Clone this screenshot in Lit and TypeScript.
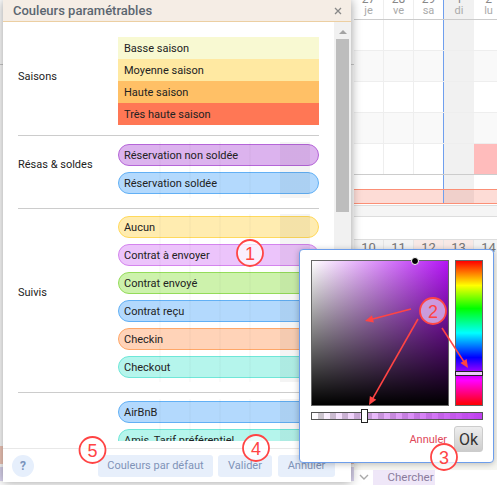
import { LitElement, html, css, svg } from "lit";
import { customElement } from "lit/decorators.js";

const days = [["27", "je"], ["28", "ve"], ["29", "sa"], ["1", "di"], ["2", "lu"]];
const days2 = ["10", "11", "12", "13", "14"];

const sections = [
  { label: "Saisons", kind: "flat", items: [["Basse saison", "s1"], ["Moyenne saison", "s2"], ["Haute saison", "s3"], ["Très haute saison", "s4"]] },
  { label: "Résas & soldes", kind: "pills", items: [["Réservation non soldée", "p-violet"], ["Réservation soldée", "p-blue"]] },
  { label: "Suivis", kind: "pills tight", items: [["Aucun", "p-yellow"], ["Contrat à envoyer", "p-pink"], ["Contrat envoyé", "p-green"], ["Contrat reçu", "p-blue"], ["Checkin", "p-orange"], ["Checkout", "p-teal"]] },
  { label: "", kind: "pills last", items: [["AirBnB", "p-blue"], ["Amis, Tarif préférentiel", "p-teal"], ["Booking", "p-blue"]] },
];

@customElement("app-root")
export class AppRoot extends LitElement {
  static styles = css`
    :host { display: block; width: 497px; height: 485px; font-family: Roboto, "Liberation Sans", sans-serif; }
    .stage { position: relative; width: 497px; height: 485px; overflow: hidden; background: #fff; display: flex; }

    .under { width: 354px; flex: none; position: relative; }
    .under .mark1 { height: 1px; background: #ccc; margin-top: 64px; }
    .under .mark2 { height: 18px; margin-top: 381px; background: #f3c9bb; }
    .under .mark3 { height: 14px; margin-top: 3px; background: #dcd6f0; }

    .cal { flex: 1; min-width: 0; display: flex; flex-direction: column; color: #aaa; font-size: 11px; }
    .row { display: flex; flex: none; }
    .cell { width: 30px; flex: none; box-sizing: border-box; border-right: 1px solid #eee; text-align: center; }
    .cell.sun { background: #f1f1f1; border-left: 1px solid #6f9fee; border-right: none; margin-left: -1px; width: 31px; }
    .head { height: 20px; border-bottom: 1px solid #ccc; box-sizing: border-box; overflow: hidden; }
    .head .cell { height: 19px; display: flex; flex-direction: column; line-height: 11px; }
    .head .n { color: #888; font-size: 12px; height: 4px; overflow: hidden; display: flex; align-items: flex-end; justify-content: center; line-height: 10px; margin-bottom: 1px; flex: none; }
    .wk { height: 31px; border-bottom: 1px solid #eee; box-sizing: border-box; }
    .wk.alt { background: #f9f9f9; }
    .wk.end { border-bottom: 1px solid #ccc; }
    .wk .cell.red { background: #ffbcbc; }
    .gap { height: 14px; display: flex; }
    .gap .cell { height: 14px; border-right: none; }
    .booking { height: 15px; background: #fddcd6; border-top: 1px solid #fb8f76; border-bottom: 1px solid #fb8f76; box-sizing: border-box; display: flex; }
    .booking .cell { height: 13px; border-right: none; }
    .booking .cell.sun { background: rgba(0,0,0,.05); }
    .strip { margin-top: 1px; background: #f5f5f5; border-top: 1px solid #ddd; border-bottom: 1px solid #ddd; height: 10px; flex: none; }
    .blank { height: 22px; flex: none; }
    .head2 { height: 24px; background: #f3f3f3; border-top: 1px solid #ddd; }
    .head2 .cell { color: #777; font-size: 13px; line-height: 15px; height: 24px; border-right: 1px solid #e4e4e4; }
    .head2 .cell.we { background: #f8e9e6; }
    .spacer { flex: 1; background: linear-gradient(#f3f3ec, #f7f7f2); }
    .search { height: 15px; display: flex; align-items: flex-start; background: #fff; flex: none; }
    .chev { width: 19px; display: flex; justify-content: center; padding-top: 4px; }
    .chercher { width: 62px; height: 15px; box-sizing: border-box; padding-left: 13px; background: #efe7f8; color: #8a7b9d; font-size: 11.5px; text-align: center; line-height: 14px; }

    .modal { position: absolute; left: 3px; top: 0; width: 348px; height: 482px; background: #fff; box-shadow: 0 0 10px rgba(0,0,0,.4); display: flex; flex-direction: column; }
    .mhead { height: 22px; flex: none; box-sizing: border-box; background: #f5ede5; border-bottom: 1px solid #eccfa2; display: flex; align-items: center; justify-content: space-between; padding: 0 9px 0 10px; }
    .title { font-size: 13px; font-weight: 500; color: #5b6670; }
    .body { height: 426px; flex: none; display: flex; }
    .scroll { flex: 1; min-width: 0; height: 419px; overflow: hidden; padding-left: 15px; box-sizing: border-box; }
    .sec { display: flex; align-items: center; width: 301px; padding: 8px 0 14px; border-bottom: 1px solid #ccc; }
    .sec.flat { padding: 15px 0 10px; }
    .sec.tight { padding-top: 7px; }
    .sec.last { border-bottom: none; }
    .lab { width: 100px; flex: none; color: #222; font-size: 11px; margin-bottom: 9px; }
    .stack { flex: 1; min-width: 0; display: flex; flex-direction: column; position: relative; }
    .sec.pills .stack { gap: 6px; }
    .sec.pills .stack::after { content: ""; position: absolute; inset: -2px 0 -4px; pointer-events: none;
      background:
        linear-gradient(rgba(0,0,0,.045), rgba(0,0,0,.045)) 162px 0 / 30px 100% no-repeat,
        repeating-linear-gradient(90deg, transparent 0 41px, rgba(0,0,0,.02) 41px 43px, transparent 43px 71px, rgba(0,0,0,.02) 71px 73px, transparent 73px 101px, rgba(0,0,0,.02) 101px 103px, transparent 103px 131px, rgba(0,0,0,.02) 131px 133px, transparent 133px 201px); }
    .it { height: 22px; box-sizing: border-box; padding-left: 6px; font-size: 11px; line-height: 24px; color: #222; white-space: nowrap; }
    .sec.pills .it { border-radius: 11px; border: 1.5px solid; line-height: 21px; padding-left: 5px; }
    .s1 { background: #f8f9d2; } .s2 { background: #ffe9a2; } .s3 { background: #ffc066; } .s4 { background: #ff7755; }
    .p-violet { background: #dcb3ee; border-color: #b565d8 !important; }
    .p-blue { background: #b3d9fd; border-color: #62b0f5 !important; }
    .p-yellow { background: #ffecb0; border-color: #ffd95c !important; }
    .p-pink { background: #ecc4fb; border-color: #d484ee !important; }
    .p-green { background: #cdf2ac; border-color: #94dc5a !important; }
    .p-orange { background: #ffd3b8; border-color: #ffa768 !important; }
    .p-teal { background: #b5f5ec; border-color: #6fe7d8 !important; }

    .sb { width: 17px; flex: none; background: #f1f1f1; display: flex; flex-direction: column; align-items: center; }
    .sb .up { width: 0; height: 0; border-left: 4px solid transparent; border-right: 4px solid transparent; border-bottom: 4px solid #a3a3a3; margin-top: 8px; }
    .sb .thumb { width: 13px; height: 173px; background: #bdbdbd; margin-top: 5px; }

    .mfoot { flex: 1; border-top: 1px solid #e8e8e8; display: flex; align-items: center; padding: 0 16px 0 9px; }
    .help { width: 22px; height: 22px; border-radius: 50%; background: #e6effc; color: #7a93bd; font-weight: 700; font-size: 12px; display: flex; align-items: center; justify-content: center; }
    .btn { height: 22px; background: #e7effb; color: #7f93b8; font-size: 11px; border-radius: 3px; display: flex; align-items: center; justify-content: center; }
    .b1 { width: 115px; margin-left: 64px; }
    .b2 { width: 54px; margin-left: 5px; }
    .b3 { width: 57px; margin-left: 6px; }

    .pop { position: absolute; left: 299px; top: 249px; width: 195px; height: 214px; box-sizing: border-box; background: #fff; border: 1px solid #6d9eeb; border-radius: 4px; box-shadow: 0 1px 6px rgba(0,0,0,.25); padding: 10px 10px 0 11px; display: flex; flex-direction: column; }
    .pick { display: flex; gap: 6px; height: 146px; flex: none; }
    .sv { width: 138px; box-sizing: border-box; border: 1px solid #666; position: relative;
      background: linear-gradient(to top, #000, transparent), linear-gradient(to right, #fff, #b414f5); }
    .knob { position: absolute; left: 99px; top: -4px; width: 6px; height: 6px; border-radius: 50%; background: #000; border: 1px solid #fff; }
    .hue { width: 28px; box-sizing: border-box; border: 1px solid #666; position: relative;
      background: linear-gradient(#f00, #ff0 17%, #0f0 33%, #0ff 50%, #00f 67%, #f0f 83%, #f00); }
    .hh { position: absolute; left: -1px; right: -1px; top: 110px; height: 5px; box-sizing: border-box; border: 1px solid #222; background: #eec8fb; }
    .alpha { flex: none; margin-top: 6px; height: 8px; box-sizing: border-box; border: 1px solid #555; position: relative;
      background: linear-gradient(to right, rgba(192,64,240,0), #c040f0), repeating-conic-gradient(#ccc 0 25%, #fff 0 50%) 0 0 / 12px 12px; }
    .ah { position: absolute; left: 49px; top: -4px; width: 7px; height: 14px; box-sizing: border-box; border: 1px solid #222; background: #fff; }
    .acts { display: flex; justify-content: flex-end; align-items: center; margin-top: 6px; gap: 7px; }
    .cancel { color: #e0485a; font-size: 11px; }
    .ok { width: 29px; height: 26px; box-sizing: border-box; border: 1px solid #ccc; border-radius: 3px; background: linear-gradient(#eee, #ccc); color: #333; font-size: 16px; display: flex; align-items: center; justify-content: center; }

    .notes { position: absolute; inset: 0; pointer-events: none; }
    .notes text { font-family: "Liberation Sans", sans-serif; font-size: 18px; fill: #f44; text-anchor: middle; }
  `;

  private cells() {
    return days.map((_, i) => html`<div class="cell ${i === 3 ? "sun" : ""}"></div>`);
  }

  render() {
    const note = (x: number, y: number, t: string, fill = "rgba(255,255,255,.75)") => svg`
      <circle cx=${x} cy=${y} r="13" fill=${fill} stroke="#f44" stroke-width="1.8"></circle>
      <text x=${x} y=${y + 6.5}>${t}</text>`;
    const arrow = (x1: number, y1: number, x2: number, y2: number) => {
      const a = Math.atan2(y2 - y1, x2 - x1);
      const l = 9, w = 0.42;
      const p = (s: number) => `${x2 - l * Math.cos(a + s * w)},${y2 - l * Math.sin(a + s * w)}`;
      return svg`<line x1=${x1} y1=${y1} x2=${x2 - 4 * Math.cos(a)} y2=${y2 - 4 * Math.sin(a)} stroke="#f44" stroke-width="1.6"></line>
        <polygon points="${x2},${y2} ${p(1)} ${p(-1)}" fill="#f44"></polygon>`;
    };
    return html`
      <div class="stage">
        <div class="under">
          <div class="mark1"></div><div class="mark2"></div><div class="mark3"></div>
        </div>
        <div class="cal">
          <div class="row head">
            ${days.map(([n, d], i) => html`<div class="cell ${i === 3 ? "sun" : ""}"><div class="n">${n}</div><div>${d}</div></div>`)}
          </div>
          <div class="row wk">${this.cells()}</div>
          <div class="row wk alt">${this.cells()}</div>
          <div class="row wk">${this.cells()}</div>
          <div class="row wk alt">${this.cells()}</div>
          <div class="row wk end">${days.map((_, i) => html`<div class="cell ${i === 3 ? "sun" : ""} ${i === 4 ? "red" : ""}"></div>`)}</div>
          <div class="gap row">${this.cells()}</div>
          <div class="booking row">${this.cells()}</div>
          <div class="strip"></div>
          <div class="blank"></div>
          <div class="row head2">
            ${days2.map((d, i) => html`<div class="cell ${i === 2 || i === 3 ? "we" : ""}">${d}</div>`)}
          </div>
          <div class="spacer"></div>
          <div class="search">
            <div class="chev"><svg width="10" height="6" viewBox="0 0 10 6"><path d="M1 1l4 4 4-4" fill="none" stroke="#aaa" stroke-width="1.4"></path></svg></div>
            <div class="chercher">Chercher</div>
          </div>
        </div>

        <div class="modal">
          <div class="mhead">
            <div class="title">Couleurs paramétrables</div>
            <svg width="8" height="8" viewBox="0 0 8 8"><path d="M1 1l6 6M7 1l-6 6" stroke="#888" stroke-width="1.3" fill="none"></path></svg>
          </div>
          <div class="body">
            <div class="scroll">
              ${sections.map((s) => html`
                <div class="sec ${s.kind}">
                  <div class="lab">${s.label}</div>
                  <div class="stack">
                    ${s.items.map(([t, c]) => html`<div class="it ${c}">${t}</div>`)}
                  </div>
                </div>`)}
            </div>
            <div class="sb"><div class="up"></div><div class="thumb"></div></div>
          </div>
          <div class="mfoot">
            <div class="help">?</div>
            <div class="btn b1">Couleurs par défaut</div>
            <div class="btn b2">Valider</div>
            <div class="btn b3">Annuler</div>
          </div>
        </div>

        <div class="pop">
          <div class="pick">
            <div class="sv"><div class="knob"></div></div>
            <div class="hue"><div class="hh"></div></div>
          </div>
          <div class="alpha"><div class="ah"></div></div>
          <div class="acts">
            <div class="cancel">Annuler</div>
            <div class="ok">Ok</div>
          </div>
        </div>

        <svg class="notes" width="497" height="485" viewBox="0 0 497 485">
          ${note(250, 253, "1")}
          ${arrow(411, 309, 365, 321)}
          ${arrow(418, 319, 369, 405)}
          ${arrow(442, 328, 468, 368)}
          ${note(433, 311, "2", "rgba(216,176,232,.85)")}
          ${note(444, 457, "3")}
          ${note(256, 448, "4")}
          ${note(92.5, 450, "5")}
        </svg>
      </div>
    `;
  }
}
